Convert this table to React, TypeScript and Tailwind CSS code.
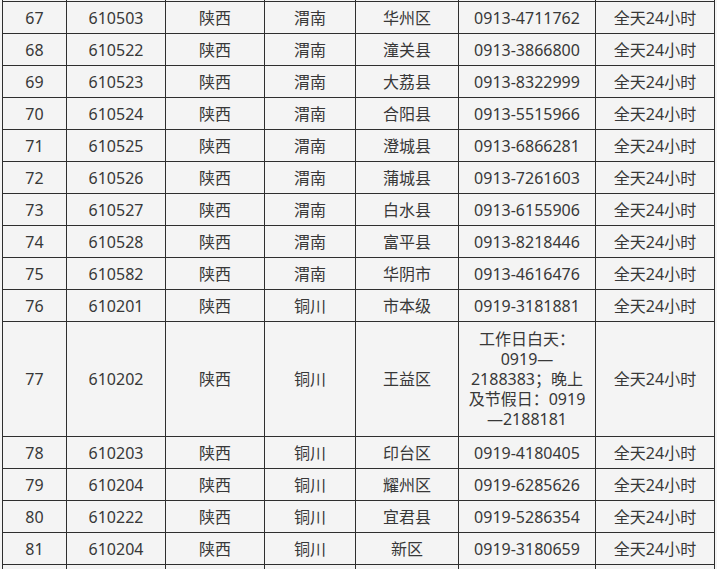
import React from "react";

type Row = [string, string, string, string, string, string, string];

const rows: Row[] = [
  ["67", "610503", "陕西", "渭南", "华州区", "0913-4711762", "全天24小时"],
  ["68", "610522", "陕西", "渭南", "潼关县", "0913-3866800", "全天24小时"],
  ["69", "610523", "陕西", "渭南", "大荔县", "0913-8322999", "全天24小时"],
  ["70", "610524", "陕西", "渭南", "合阳县", "0913-5515966", "全天24小时"],
  ["71", "610525", "陕西", "渭南", "澄城县", "0913-6866281", "全天24小时"],
  ["72", "610526", "陕西", "渭南", "蒲城县", "0913-7261603", "全天24小时"],
  ["73", "610527", "陕西", "渭南", "白水县", "0913-6155906", "全天24小时"],
  ["74", "610528", "陕西", "渭南", "富平县", "0913-8218446", "全天24小时"],
  ["75", "610582", "陕西", "渭南", "华阴市", "0913-4616476", "全天24小时"],
  ["76", "610201", "陕西", "铜川", "市本级", "0919-3181881", "全天24小时"],
];

const rows2: Row[] = [
  ["78", "610203", "陕西", "铜川", "印台区", "0919-4180405", "全天24小时"],
  ["79", "610204", "陕西", "铜川", "耀州区", "0919-6285626", "全天24小时"],
  ["80", "610222", "陕西", "铜川", "宜君县", "0919-5286354", "全天24小时"],
  ["81", "610204", "陕西", "铜川", "新区", "0919-3180659", "全天24小时"],
];

const cell = "border border-[#2e2e2e] text-center align-middle p-0";

function DataRow({ r }: { r: Row }) {
  return (
    <tr className="h-[32px]">
      {r.map((c, i) => (
        <td key={i} className={cell}>
          {c}
        </td>
      ))}
    </tr>
  );
}

function EmptyRow() {
  return (
    <tr className="h-[32px]">
      {[0, 1, 2, 3, 4, 5, 6].map((i) => (
        <td key={i} className={cell}></td>
      ))}
    </tr>
  );
}

export default function App() {
  return (
    <div
      className="w-[717px] h-[569px] overflow-hidden bg-[#f4f4f4] text-[#383838] text-[16px] leading-[20px]"
      style={{ fontFamily: '"Noto Sans", "Noto Sans CJK SC", sans-serif' }}
    >
      <table className="table-fixed border-collapse ml-[2px] -mt-[31px] w-[712px]">
        <colgroup>
          <col className="w-[64px]" />
          <col className="w-[99px]" />
          <col className="w-[99px]" />
          <col className="w-[91px]" />
          <col className="w-[103px]" />
          <col className="w-[137px]" />
          <col className="w-[119px]" />
        </colgroup>
        <tbody>
          <EmptyRow />
          {rows.map((r) => (
            <DataRow key={r[0]} r={r} />
          ))}
          <tr className="h-[115px]">
            <td className={cell}>77</td>
            <td className={cell}>610202</td>
            <td className={cell}>陕西</td>
            <td className={cell}>铜川</td>
            <td className={cell}>王益区</td>
            <td className={cell}>
              <div className="flex flex-col items-center">
                <span>工作日白天：</span>
                <span>0919—</span>
                <span>2188383；晚上</span>
                <span>及节假日：0919</span>
                <span>—2188181</span>
              </div>
            </td>
            <td className={cell}>全天24小时</td>
          </tr>
          {rows2.map((r) => (
            <DataRow key={r[0]} r={r} />
          ))}
          <EmptyRow />
        </tbody>
      </table>
    </div>
  );
}
